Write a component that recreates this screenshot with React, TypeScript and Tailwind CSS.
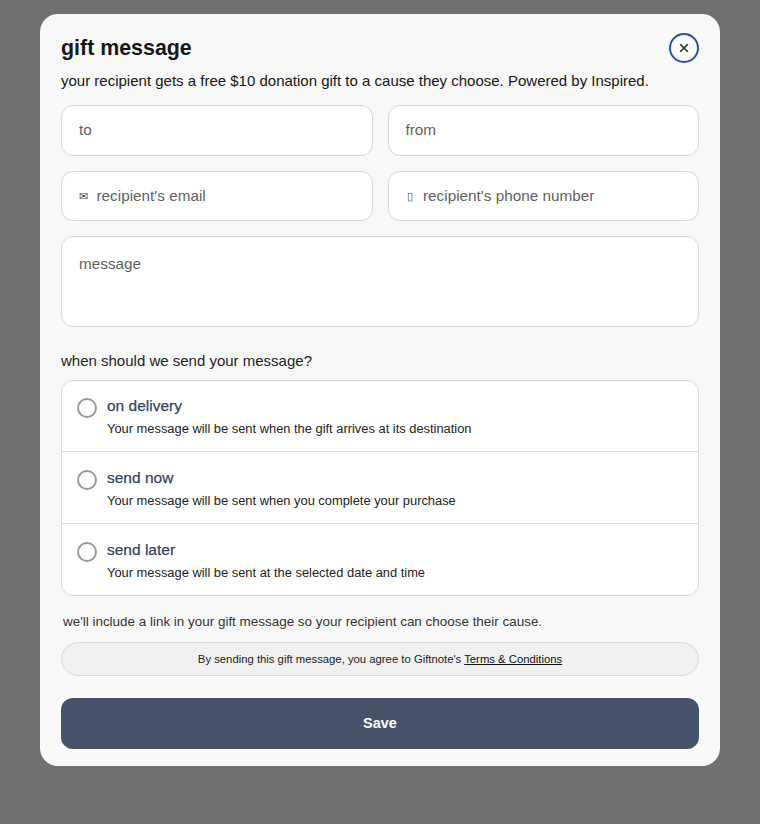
const font = { fontFamily: '"Liberation Sans", Arial, sans-serif' }

function Field({ label, icon }: { label: string; icon?: string }) {
  return (
    <div className="flex h-[50.5px] items-center rounded-xl border border-[#d6d6d6] bg-white px-[17px] pt-[1px] text-[15.3px] text-[#5f5f5f]">
      {icon && <span className="mr-2 flex w-[9.5px] justify-center text-[11px] text-[#444]">{icon}</span>}
      <span>{label}</span>
    </div>
  )
}

const options = [
  { title: 'on delivery', text: 'Your message will be sent when the gift arrives at its destination' },
  { title: 'send now', text: 'Your message will be sent when you complete your purchase' },
  { title: 'send later', text: 'Your message will be sent at the selected date and time' },
]

export default function App() {
  return (
    <div style={font} className="flex h-[824px] w-[760px] justify-center bg-[#707070] pt-[14px]">
      <div className="h-[752px] w-[680px] rounded-[18px] bg-[#f8f8f8] px-[21px] pt-[19px]">
        <div className="flex items-center justify-between">
          <h2 className="text-[21.4px] leading-[30px] font-bold text-[#161616]">gift message</h2>
          <button className="flex h-[30px] w-[30px] items-center justify-center rounded-full border-2 border-[#2f4f9f] text-[#222]">
            <svg width="10" height="10" viewBox="0 0 12 12" fill="none" stroke="currentColor" strokeWidth="1.8">
              <path d="M1.5 1.5l9 9M10.5 1.5l-9 9" />
            </svg>
          </button>
        </div>
        <p className="mt-[7.5px] text-[15px] leading-[20px] text-[#161616]">
          your recipient gets a free $10 donation gift to a cause they choose. Powered by Inspired.
        </p>

        <div className="mt-[14.5px] grid grid-cols-2 gap-x-[15px] gap-y-[15px]">
          <Field label="to" />
          <Field label="from" />
          <Field label="recipient's email" icon="✉" />
          <Field label="recipient's phone number" icon="▯" />
        </div>

        <div className="mt-[15px] h-[91px] rounded-xl border border-[#d6d6d6] bg-white px-[17px] pt-[17px] text-[15.3px] leading-[20px] text-[#5f5f5f]">
          message
        </div>

        <p className="mt-[24px] text-[15px] leading-[20px] text-[#222]">when should we send your message?</p>

        <div className="mt-[9px] divide-y divide-[#dcdcdc] rounded-xl border border-[#d6d6d6] bg-white">
          {options.map(o => (
            <div key={o.title} className="flex h-[72px] items-start pl-[15px] pt-[17px] first:h-[71px] first:pt-[16px] last:h-[71px]">
              <span className="mt-[1px] h-5 w-5 rounded-full border-2 border-[#9a9a9a] bg-white" />
              <div className="ml-[10px]">
                <div className="text-[15.5px] leading-[18px] font-medium text-[#34425c] [-webkit-text-stroke:0.25px_#34425c]">{o.title}</div>
                <div className="mt-[6px] text-[12.88px] leading-[16px] text-[#222]">{o.text}</div>
              </div>
            </div>
          ))}
        </div>

        <p className="mt-[17px] ml-[2px] text-[13.45px] leading-[18px] text-[#333]">
          we'll include a link in your gift message so your recipient can choose their cause.
        </p>

        <div className="mt-[11px] flex h-[34px] items-center justify-center rounded-[17px] border border-[#d9d9d9] bg-[#f0f0f0] pt-[1px] text-[11.3px] text-[#222]">
          <span>By sending this gift message, you agree to Giftnote's <a className="text-[#111] underline">Terms &amp; Conditions</a></span>
        </div>

        <button className="mt-[21.5px] flex h-[51px] w-full items-center justify-center rounded-xl bg-[#455269] pt-[1px] text-[14.5px] font-bold text-white">
          Save
        </button>
      </div>
    </div>
  )
}
